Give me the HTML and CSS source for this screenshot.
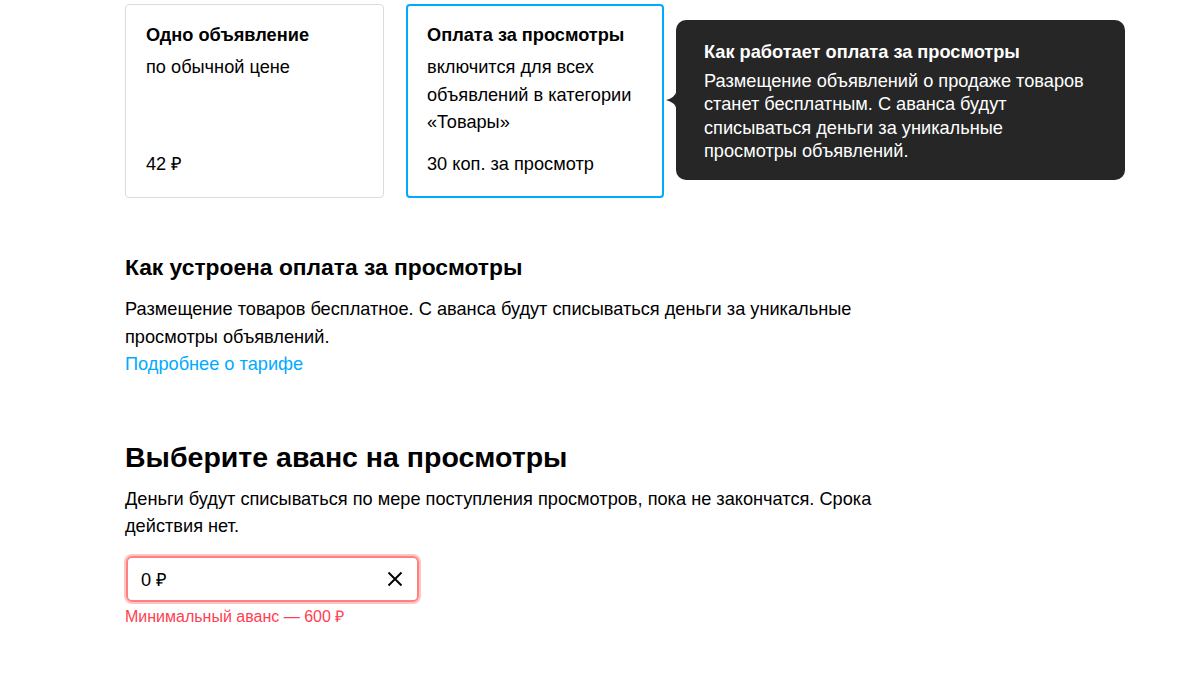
FILE: index.html
```html
<!DOCTYPE html>
<html lang="ru">
<head>
<meta charset="utf-8">
<link rel="stylesheet" href="styles.css">
</head>
<body>
<main class="page">
  <section class="tariffs">
    <div class="card">
      <div class="card-title">Одно объявление</div>
      <div class="card-desc">по обычной цене</div>
      <div class="card-price">42 ₽</div>
    </div>
    <div class="card card-active">
      <div class="card-title">Оплата за просмотры</div>
      <div class="card-desc">включится для всех объявлений в категории «Товары»</div>
      <div class="card-price">30 коп. за просмотр</div>
    </div>
    <div class="tooltip">
      <svg class="tooltip-arrow" width="11" height="20" viewBox="0 0 11 20"><path d="M11 0 Q9 8 0 10 Q9 12 11 20 Z" fill="#262626"/></svg>
      <div class="tooltip-title">Как работает оплата за просмотры</div>
      <div class="tooltip-text">Размещение объявлений о продаже товаров станет бесплатным. С аванса будут списываться деньги за уникальные просмотры объявлений.</div>
    </div>
  </section>

  <section class="info">
    <h2 class="info-title">Как устроена оплата за просмотры</h2>
    <p class="text">Размещение товаров бесплатное. С аванса будут списываться деньги за уникальные просмотры объявлений.</p>
    <a class="link" href="#">Подробнее о тарифе</a>
  </section>

  <section class="advance">
    <h1 class="advance-title">Выберите аванс на просмотры</h1>
    <p class="text text-wide">Деньги будут списываться по мере поступления просмотров, пока не закончатся. Срока действия нет.</p>
    <div class="input input-error">
      <span class="input-value">0 ₽</span>
      <svg class="input-clear" width="16" height="16" viewBox="0 0 16 16"><path d="M1.5 1.5L14.5 14.5M14.5 1.5L1.5 14.5" stroke="#000" stroke-width="1.9"/></svg>
    </div>
    <div class="error">Минимальный аванс — 600 ₽</div>
  </section>
</main>
</body>
</html>
```

FILE: styles.css
```css
* { box-sizing: border-box; }
html, body { margin: 0; padding: 0; background: #fff; }
body {
  font-family: "Liberation Sans", Arial, sans-serif;
  color: #000;
  font-size: 18.2px;
}
.page {
  padding: 4px 0 0 125px;
  width: 1200px;
}
.tariffs {
  display: flex;
  align-items: flex-start;
  gap: 22px;
}
.card {
  width: 259px;
  height: 194px;
  border: 1px solid #dcdcdc;
  border-radius: 4px;
  padding: 18px 20px 19px 20px;
  display: flex;
  flex-direction: column;
}
.card-active {
  width: 258px;
  border: 2px solid #00aaff;
  padding: 17px 19px 18px 19px;
}
.card-title {
  font-weight: bold;
  line-height: 24px;
  margin-bottom: 7px;
}
.card-desc {
  line-height: 27.5px;
}
.card-price {
  margin-top: auto;
  line-height: 27px;
}
.tooltip {
  position: relative;
  margin-top: 16px;
  margin-left: -10px;
  width: 449px;
  background: #262626;
  color: #fff;
  border-radius: 10px;
  padding: 20px 24px 16px 28px;
}
.tooltip-arrow {
  position: absolute;
  left: -10px;
  top: 70px;
  display: block;
}
.tooltip-title {
  font-weight: bold;
  line-height: 24px;
  margin-bottom: 6px;
}
.tooltip-text {
  width: 386px;
  line-height: 23.4px;
}
.info {
  margin-top: 54px;
}
.info-title {
  margin: 0 0 14px;
  font-size: 22.8px;
  line-height: 30px;
  font-weight: bold;
}
.text {
  margin: 0;
  width: 760px;
  line-height: 27.5px;
}
.text-wide { width: 780px; }
.link {
  display: block;
  color: #00aaff;
  text-decoration: none;
  line-height: 27.5px;
}
.advance {
  margin-top: 58px;
}
.advance-title {
  margin: 0 0 9px;
  font-size: 28.5px;
  line-height: 40px;
  font-weight: bold;
}
.input {
  margin: 15px 0 0 1px;
  width: 293px;
  height: 46px;
  border-radius: 6px;
  display: flex;
  align-items: center;
  justify-content: space-between;
  padding: 0 14px 0 13px;
}
.input-error {
  border: 2px solid #ff8080;
  box-shadow: 0 0 0 2px #ffc4c4;
}
.input-value {
  font-size: 18.2px;
}
.input-clear { display: block; }
.error {
  margin-top: 5px;
  color: #ff4053;
  font-size: 16px;
  line-height: 20px;
}
```
